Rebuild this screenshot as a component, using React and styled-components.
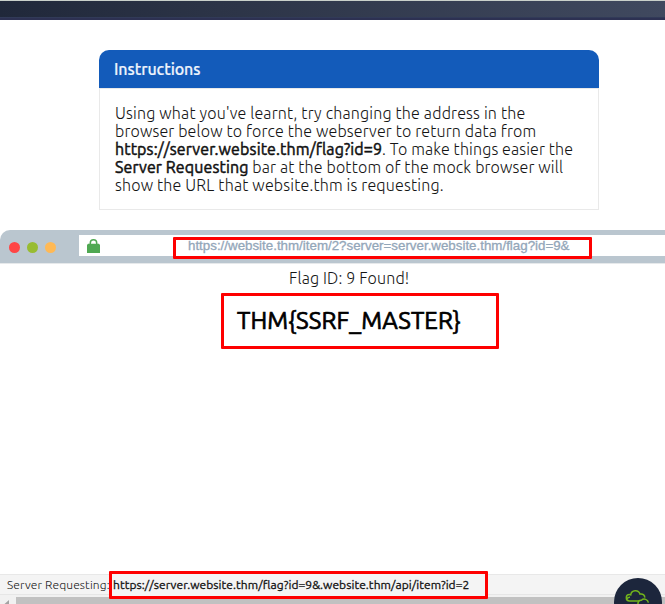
import React from 'react';
import styled, { createGlobalStyle } from 'styled-components';

const GlobalStyle = createGlobalStyle`
  * { box-sizing: border-box; }
  html, body { margin: 0; padding: 0; background: #fff; }
  body { overflow: hidden; }
`;

const Page = styled.div`
  position: relative;
  display: flex;
  flex-direction: column;
  width: 665px;
  height: 604px;
  overflow: hidden;
  background: #fff;
  color: #151515;
  font-family: Ubuntu, "Noto Sans", sans-serif;
`;

const TopBar = styled.header`
  flex: none;
  height: 20px;
  border-top: 1px solid #c9d0ca;
  border-bottom: 2px solid #2d3152;
  background: linear-gradient(90deg, #20283a 0%, #2c3447 33%, #40495f 100%);
  box-shadow: inset 0 -1px 0 #313a58;
`;

const Card = styled.section`
  flex: none;
  width: 500px;
  height: 160px;
  margin: 30px 0 0 99px;
`;

const CardHeader = styled.h2`
  height: 38px;
  margin: 0;
  padding-left: 15px;
  border-radius: 10px 10px 0 0;
  background: #135bba;
  color: #eef4fc;
  font-size: 16px;
  font-weight: 500;
  line-height: 38px;
  letter-spacing: -0.06px;
  -webkit-text-stroke: 0.2px #eef4fc;
`;

const CardBody = styled.div`
  height: 122px;
  padding: 15px 0 0 15px;
  border: 1px solid #e9e9e9;
`;

const Line = styled.div`
  height: 18px;
  font-size: 16px;
  font-weight: 300;
  line-height: 18px;
  white-space: pre;
`;

const Text = styled.span`
  letter-spacing: ${(p) => p.$track}px;
`;

const Strong = styled.strong`
  color: #111;
  font-weight: 400;
  -webkit-text-stroke: 0.5px #111;
  letter-spacing: ${(p) => p.$track}px;
`;

const BrowserBar = styled.div`
  flex: none;
  display: flex;
  align-items: flex-start;
  height: 34px;
  margin-top: 20px;
  border-bottom: 1px solid #e6e9eb;
  border-radius: 10px 0 0 0;
  background: #bac6cf;
`;

const Dots = styled.div`
  display: flex;
  gap: 7px;
  width: 79px;
  padding: 12px 0 0 9px;
`;

const Dot = styled.i`
  width: 11px;
  height: 11px;
  border-radius: 50%;
  background: ${(p) => p.$color};
`;

const AddressField = styled.div`
  flex: 1;
  display: flex;
  height: 21px;
  margin-top: 5px;
  padding-left: 8px;
  background: #fff;
`;

const LockIcon = styled.svg`
  flex: none;
  width: 13px;
  height: 14px;
  margin-top: 4px;
`;

const Frame = styled.div`
  flex: none;
  width: ${(p) => p.$w}px;
  height: ${(p) => p.$h}px;
  border: 3px solid #fe0000;
  border-radius: 1px;
  white-space: nowrap;
`;

const UrlFrame = styled(Frame)`
  margin: 2px 0 0 73px;
  padding-left: 12px;
  color: #93a6b9;
  -webkit-text-stroke: 0.3px #93a6b9;
  font: 13.33px/11px "Liberation Sans", Arial, sans-serif;
`;

const Viewport = styled.main`
  flex: 1;
  min-height: 0;
`;

const Found = styled.p`
  margin: 4px 0 0 289px;
  font-size: 16px;
  font-weight: 300;
  line-height: 20px;
  letter-spacing: 0.15px;
`;

const FlagFrame = styled(Frame)`
  margin: 5px 0 0 221px;
  padding-left: 13px;
  color: #000;
  font-size: 24px;
  font-weight: 400;
  -webkit-text-stroke: 0.7px #000;
  line-height: 49px;
  letter-spacing: 0.12px;
`;

const StatusBar = styled.footer`
  flex: none;
  display: flex;
  height: 21px;
  padding-left: 7px;
  border-top: 1px solid #e8e8e8;
  border-bottom: 1px solid #e6e6e6;
  background: #f4f4f4;
  font-size: 12px;
  line-height: 20px;
`;

const StatusLabel = styled.span`
  width: 102px;
  flex: none;
  white-space: nowrap;
  font-weight: 350;
  letter-spacing: 0.14px;
`;

const StatusFrame = styled(Frame)`
  position: relative;
  margin-top: -4px;
  padding-left: 1px;
  background: #f4f4f4;
  color: #111;
  font-weight: 400;
  -webkit-text-stroke: 0.3px #111;
  line-height: 22px;
  letter-spacing: 0.065px;
`;

const ScrollTrack = styled.div`
  flex: none;
  display: flex;
  height: 9px;
  padding-top: 2px;
  background: #f1f1f1;
`;

const ScrollArrow = styled.svg`
  width: 16px;
  height: 7px;
`;

const ScrollThumb = styled.div`
  flex: 1;
  background: #c1c1c1;
`;

const CloudBadge = styled.div`
  position: absolute;
  left: 614px;
  top: 578px;
  width: 48px;
  height: 48px;
  border-radius: 50%;
  background: #1c263c;
`;

export default function App() {
  return (
    <>
      <GlobalStyle />
      <Page>
        <TopBar />
        <Card>
          <CardHeader>Instructions</CardHeader>
          <CardBody>
            <Line><Text $track={0.18}>Using what you've learnt, try changing the address in the</Text></Line>
            <Line><Text $track={0.15}>browser below to force the webserver to return data from</Text></Line>
            <Line>
              <Strong $track={0.13}>https://server.website.thm/flag?id=9</Strong>
              <Text $track={0.13}>. To make things easier the</Text>
            </Line>
            <Line>
              <Strong $track={0.12}>Server Requesting</Strong>
              <Text $track={0.15}> bar at the bottom of the mock browser will</Text>
            </Line>
            <Line><Text $track={0.17}>show the URL that website.thm is requesting.</Text></Line>
          </CardBody>
        </Card>

        <BrowserBar>
          <Dots>
            <Dot $color="#ff4545" />
            <Dot $color="#98bc32" />
            <Dot $color="#ffb955" />
          </Dots>
          <AddressField>
            <LockIcon viewBox="0 0 13 14">
              <path d="M3.3 5.5V4a3.2 3.2 0 0 1 6.4 0v1.5" fill="none" stroke="#4fa852" strokeWidth="1.5" />
              <path d="M1 4.8h11l1 1.2v8H0V6z" fill="#4fa852" />
            </LockIcon>
            <UrlFrame $w={419} $h={22}>
              https://website.thm/item/2?server=server.website.thm/flag?id=9&amp;
            </UrlFrame>
          </AddressField>
        </BrowserBar>

        <Viewport>
          <Found>Flag ID: 9 Found!</Found>
          <FlagFrame $w={278} $h={56}>THM{'{'}SSRF_MASTER{'}'}</FlagFrame>
        </Viewport>

        <StatusBar>
          <StatusLabel>Server Requesting:</StatusLabel>
          <StatusFrame $w={379} $h={28}>
            https://server.website.thm/flag?id=9&amp;.website.thm/api/item?id=2
          </StatusFrame>
        </StatusBar>
        <ScrollTrack>
          <ScrollArrow viewBox="0 0 16 7">
            <path d="M9 3v8L4.5 7z" fill="#a3a3a3" />
          </ScrollArrow>
          <ScrollThumb />
        </ScrollTrack>

        <CloudBadge>
          <svg width="48" height="26" viewBox="0 0 48 26" fill="none" stroke="#72b51c" strokeWidth="1.5">
            <path d="M25 23H15.5a3.2 3.2 0 0 1 0-6.4c.4 0 .8 0 1.2.2a4.8 4.8 0 0 1 9.3-.7c3.2-.6 5 1.5 4.7 3.6" />
            <path d="M24 26c-.2-2.4 1.4-4 3.4-3.8a4.2 4.2 0 0 1 7 2.5" />
            <path d="M12.5 21.5c.8-1.8 2-2.4 3.5-2.2" />
          </svg>
        </CloudBadge>
      </Page>
    </>
  );
}
